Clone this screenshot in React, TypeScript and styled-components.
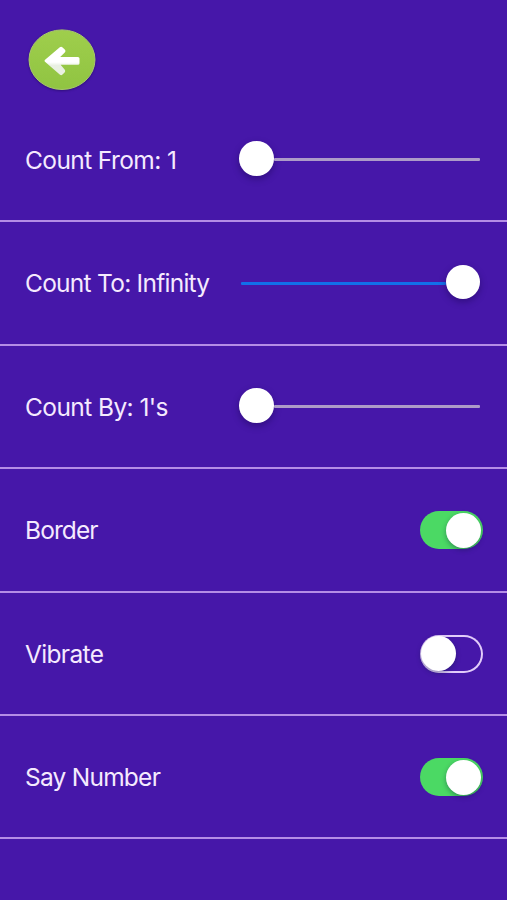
import React, { useState } from "react";
import styled, { createGlobalStyle } from "styled-components";

const GlobalStyle = createGlobalStyle`
  * { box-sizing: border-box; }
  body { margin: 0; background: #4617a9; }
`;

const Screen = styled.main`
  display: flex;
  flex-direction: column;
  width: 507px;
  height: 900px;
  overflow: hidden;
  background: #4617a9;
  color: #f5eafe;
  font-family: Inter, "Liberation Sans", sans-serif;
`;

const Header = styled.header`
  flex: none;
  height: 99px;
  padding: 28px 0 0 26px;
`;

const BackButton = styled.button`
  display: block;
  width: 72px;
  height: 66px;
  padding: 0;
  border: 0;
  background: none;
  svg { display: block; filter: drop-shadow(0 1.5px 1px rgba(25, 5, 80, 0.5)); }
`;

const Row = styled.section`
  flex: none;
  display: flex;
  align-items: center;
  justify-content: space-between;
  height: 123.4px;
  padding: 0 24px 0 25px;
  border-bottom: 2px solid #b48de6;
`;

const Label = styled.span<{ $spacing: number }>`
  padding-top: 0.6px;
  font-size: 24.5px;
  line-height: 30px;
  letter-spacing: ${(p) => p.$spacing}px;
  white-space: nowrap;
`;

const SliderBox = styled.div<{ $full: boolean }>`
  display: flex;
  align-items: center;
  flex-direction: ${(p) => (p.$full ? "row-reverse" : "row")};
  width: 241px;
  height: 35px;
  margin: 0 2.6px 2px 0;
`;

const Thumb = styled.span`
  flex: none;
  width: 34.5px;
  height: 34.5px;
  border-radius: 50%;
  background: #fff;
  box-shadow: 0 3px 7px rgba(20, 0, 70, 0.4);
`;

const Track = styled.span<{ $full: boolean }>`
  flex: 1;
  height: 3px;
  margin: 2.4px 0 0 ${(p) => (p.$full ? 1.2 : 0)}px;
  border-radius: 1px;
  background: ${(p) => (p.$full ? "#126fea" : "#ad9bc8")};
`;

const Switch = styled.button<{ $on: boolean }>`
  display: flex;
  align-items: center;
  justify-content: ${(p) => (p.$on ? "flex-end" : "flex-start")};
  width: 63px;
  height: 38px;
  margin-top: 1px;
  padding: 0 ${(p) => (p.$on ? 2 : 0.5)}px;
  border: 0;
  border-radius: 19px;
  background: ${(p) => (p.$on ? "#4bd964" : "transparent")};
  box-shadow: ${(p) => (p.$on ? "none" : "inset 0 0 0 2px #e2ccfa")};
`;

const Knob = styled.span`
  width: 35px;
  height: 35px;
  border-radius: 50%;
  background: #fff;
  box-shadow: 0 2px 5px rgba(10, 30, 60, 0.38);
`;

function Slider({ full = false }: { full?: boolean }) {
  return (
    <SliderBox $full={full}>
      <Thumb />
      <Track $full={full} />
    </SliderBox>
  );
}

function Toggle({ name, initial }: { name: string; initial: boolean }) {
  const [on, setOn] = useState(initial);
  return (
    <Switch $on={on} role="switch" aria-checked={on} aria-label={name} onClick={() => setOn(!on)}>
      <Knob />
    </Switch>
  );
}

const sliders = [
  { text: "Count From: 1", full: false, spacing: -0.6 },
  { text: "Count To: Infinity", full: true, spacing: -0.74 },
  { text: "Count By: 1's", full: false, spacing: -0.58 },
];

const toggles = [
  { text: "Border", on: true, spacing: -0.9 },
  { text: "Vibrate", on: false, spacing: -0.66 },
  { text: "Say Number", on: true, spacing: -0.76 },
];

export default function App() {
  return (
    <>
      <GlobalStyle />
      <Screen>
        <Header>
          <BackButton aria-label="Back">
            <svg width="72" height="66" viewBox="0 0 72 66">
              <defs>
                <linearGradient id="disc" x1="0" y1="0" x2="0" y2="1">
                  <stop offset="0" stopColor="#9fce4c" />
                  <stop offset="1" stopColor="#90c442" />
                </linearGradient>
                <linearGradient id="arrow" x1="0" y1="0" x2="0" y2="1">
                  <stop offset="0.54" stopColor="#ffffff" />
                  <stop offset="0.66" stopColor="#e9f0e2" />
                </linearGradient>
              </defs>
              <ellipse cx="36" cy="31.7" rx="33" ry="29.8" fill="url(#disc)" stroke="#a9c96d" strokeWidth="1" />
              <path
                d="M18.8 31.9 Q18.1 32.8 19 33.7 L34 46.8 Q35.3 47.8 36.5 46.6 L38.8 44.2 Q39.7 43 38.8 41.8 L34.6 36.8 H51.9 Q53.5 36.8 53.5 35.2 V30.5 Q53.5 28.9 51.9 28.9 H34.2 L39 24.2 Q40 23 39 21.8 L36.6 19.4 Q35.2 18.2 33.8 19.3 Z"
                fill="url(#arrow)"
              />
            </svg>
          </BackButton>
        </Header>
        {sliders.map((s) => (
          <Row key={s.text}>
            <Label $spacing={s.spacing}>{s.text}</Label>
            <Slider full={s.full} />
          </Row>
        ))}
        {toggles.map((t) => (
          <Row key={t.text}>
            <Label $spacing={t.spacing}>{t.text}</Label>
            <Toggle name={t.text} initial={t.on} />
          </Row>
        ))}
      </Screen>
    </>
  );
}
